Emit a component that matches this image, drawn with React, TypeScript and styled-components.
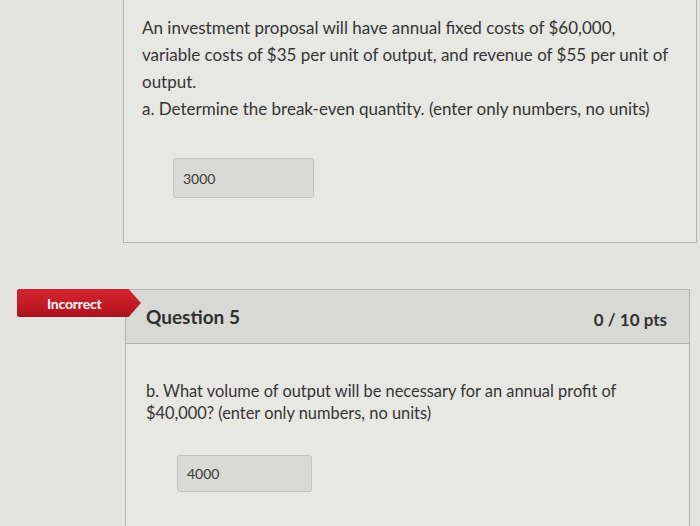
import styled, { createGlobalStyle } from "styled-components";

const GlobalStyle = createGlobalStyle`
  html, body {
    margin: 0;
    padding: 0;
    background: #e3e3e0;
    font-family: Lato, "Open Sans", "Liberation Sans", sans-serif;
    color: #363636;
    overflow: hidden;
  }
`;

const Page = styled.div`
  width: 700px;
  height: 526px;
  display: flex;
  flex-direction: column;
`;

const PrevCard = styled.section`
  margin-left: 123px;
  width: 574px;
  box-sizing: border-box;
  background: #e7e7e4;
  border: 1.5px solid #b4b4b1;
  border-top: none;
  padding: 14px 18px 44px 18px;
`;

const Prompt = styled.p<{ $size?: number; $lh?: number; $width?: number }>`
  margin: 0;
  max-width: ${({ $width }) => ($width ? `${$width}px` : "none")};
  font-size: ${({ $size }) => $size ?? 17}px;
  line-height: ${({ $lh }) => $lh ?? 27}px;
  color: #353535;
`;

const AnswerBox = styled.div<{ $w: number; $h: number; $top: number }>`
  margin: ${({ $top }) => $top}px 0 0 31px;
  width: ${({ $w }) => $w}px;
  height: ${({ $h }) => $h}px;
  box-sizing: border-box;
  background: #d9d9d6;
  border: 1px solid #c3c3c0;
  border-radius: 3px;
  display: flex;
  align-items: center;
  padding-left: 9px;
  font-size: 14px;
  color: #3a3a3a;
`;

const QuestionRow = styled.div`
  position: relative;
  margin-top: 46px;
  margin-left: 125px;
  width: 565px;
`;

const Badge = styled.div`
  position: absolute;
  left: -108px;
  top: 0;
  width: 124px;
  height: 28px;
  display: flex;
  align-items: center;
  padding-left: 30px;
  box-sizing: border-box;
  background: linear-gradient(180deg, #d3262f 0%, #c21a25 60%, #a8121c 100%);
  clip-path: polygon(0 0, 90% 0, 100% 50%, 90% 100%, 0 100%);
  border-radius: 2px 0 0 2px;
  color: #fff;
  font-weight: 700;
  font-size: 14px;
  letter-spacing: -0.2px;
  z-index: 1;
`;

const Card = styled.section`
  box-sizing: border-box;
  border: 1.5px solid #b4b4b1;
  background: #e7e7e4;
  height: 260px;
`;

const Header = styled.header`
  display: flex;
  justify-content: space-between;
  align-items: center;
  height: 53px;
  padding: 0 22px 0 20px;
  background: #d8d8d5;
  border-bottom: 1.5px solid #b4b4b1;
`;

const Title = styled.h2`
  margin: 0;
  font-size: 19px;
  font-weight: 700;
  color: #2f2f2f;
`;

const Points = styled.span`
  margin-top: 6px;
  font-size: 17px;
  font-weight: 700;
  color: #333;
`;

const Body = styled.div`
  padding: 36px 20px 0 20px;
`;

export default function App() {
  return (
    <>
      <GlobalStyle />
      <Page>
        <PrevCard>
          <Prompt $width={533}>
            An investment proposal will have annual fixed costs of $60,000,
            variable costs of $35 per unit of output, and revenue of $55 per
            unit of output.
          </Prompt>
          <Prompt>
            a. Determine the break-even quantity. (enter only numbers, no
            units)
          </Prompt>
          <AnswerBox $w={141} $h={40} $top={36}>3000</AnswerBox>
        </PrevCard>

        <QuestionRow>
          <Badge>Incorrect</Badge>
          <Card>
            <Header>
              <Title>Question 5</Title>
              <Points>0 / 10 pts</Points>
            </Header>
            <Body>
              <Prompt $size={16.4} $lh={22}>
                b. What volume of output will be necessary for an annual profit
                of $40,000? (enter only numbers, no units)
              </Prompt>
              <AnswerBox $w={135} $h={37} $top={31}>4000</AnswerBox>
            </Body>
          </Card>
        </QuestionRow>
      </Page>
    </>
  );
}
